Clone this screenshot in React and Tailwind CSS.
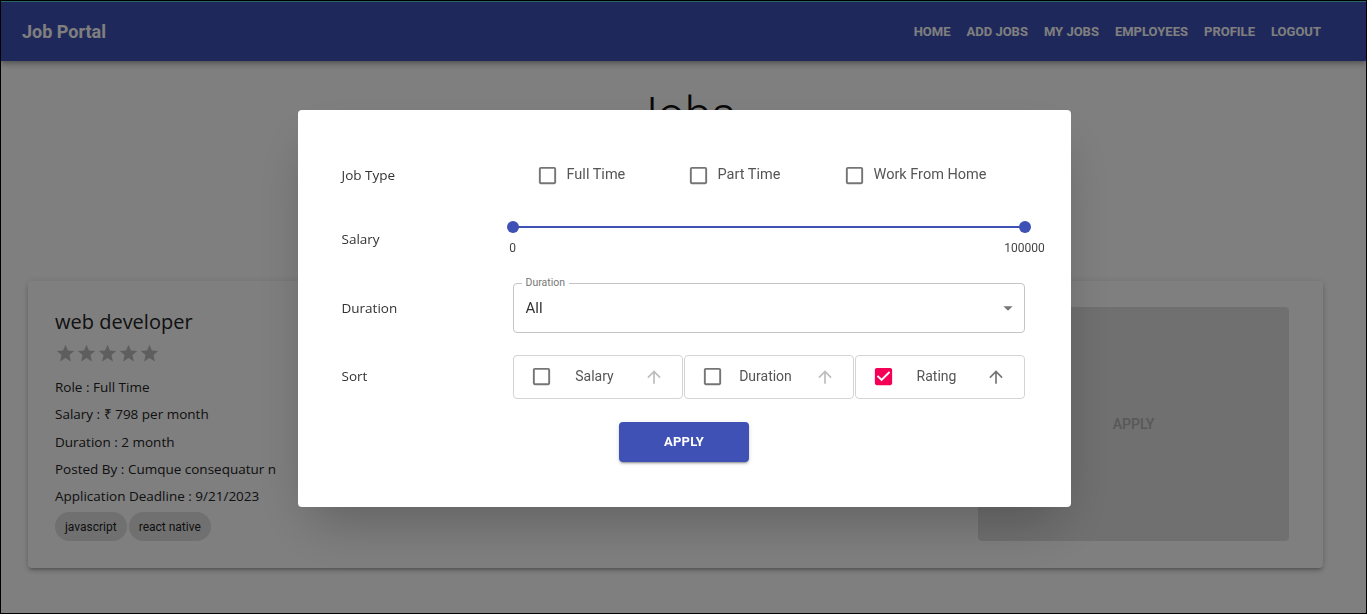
const STAR = "M12 17.27L18.18 21l-1.64-7.19L22 9.24l-7.19-.61L12 2 9.19 8.63 2 9.24l5.46 4.55L5.82 21z";
const BOX = "M19 5v14H5V5h14m0-2H5c-1.1 0-2 .9-2 2v14c0 1.1.9 2 2 2h14c1.1 0 2-.9 2-2V5c0-1.1-.9-2-2-2z";
const BOX_CHECKED =
  "M19 3H5c-1.11 0-2 .9-2 2v14c0 1.1.89 2 2 2h14c1.11 0 2-.9 2-2V5c0-1.1-.89-2-2-2zm-9 14l-5-5 1.41-1.41L10 14.17l7.59-7.59L19 8l-9 9z";
const ARROW_UP = "M4 12l1.41 1.41L11 7.83V20h2V7.83l5.58 5.59L20 12l-8-8-8 8z";

const NAV = ["Home", "Add Jobs", "My Jobs", "Employees", "Profile", "Logout"];
const ROBOTO = "font-['Roboto',sans-serif]";
const OPEN = "font-['Open_Sans',sans-serif]";

const Checkbox = ({ checked }) =>
  checked ? (
    <svg viewBox="0 0 24 24" className="h-[23px] w-[23px] shrink-0">
      <rect x="5" y="5" width="14" height="14" fill="#fff" />
      <path d={BOX_CHECKED} fill="#f50057" />
    </svg>
  ) : (
    <svg viewBox="0 0 24 24" className="h-[23px] w-[23px] shrink-0">
      <path d={BOX} fill="rgba(0,0,0,0.54)" />
    </svg>
  );

const JobTypeOption = ({ label, width }) => (
  <div className={`flex items-center ${width}`}>
    <Checkbox />
    <span className={`ml-[8px] -mt-[2px] text-[14.5px] text-[#555] ${ROBOTO}`}>{label}</span>
  </div>
);

const SortButton = ({ label, checked }) => (
  <div className="flex h-[44px] w-[170px] items-center rounded border border-[#d4d4d4] pl-[16px] pr-[18px]">
    <Checkbox checked={checked} />
    <span className={`mr-[7px] flex-1 text-center text-[14px] text-[#555] ${ROBOTO}`}>{label}</span>
    <svg viewBox="0 0 24 24" className="h-[20px] w-[20px]">
      <path d={ARROW_UP} fill={checked ? "#757575" : "#bdbdbd"} />
    </svg>
  </div>
);

const Row = ({ label, height, children }) => (
  <div className={`flex items-center ${height}`}>
    <div className={`w-[171px] shrink-0 text-[13.5px] text-[#333] ${OPEN}`}>{label}</div>
    <div className="w-[512px]">{children}</div>
  </div>
);

const FilterModal = () => (
  <div className="fixed inset-0 flex items-center justify-center bg-black/50">
    <div className="mt-[2px] ml-[1px] w-[773px] rounded bg-white px-[44px] pt-[41px] pb-[45px] shadow-2xl">
      <Row label="Job Type" height="h-[50px]">
        <div className="flex items-center pl-[23px]">
          <JobTypeOption label="Full Time" width="w-[151px]" />
          <JobTypeOption label="Part Time" width="w-[156px]" />
          <JobTypeOption label="Work From Home" width="" />
        </div>
      </Row>

      <Row label="Salary" height="h-[77px]">
        <div className="relative h-[40px]">
          <div className="relative flex h-[16px] items-center">
            <div className="h-[2px] w-full bg-[#3f51b5]" />
            <span className="absolute left-[-6px] h-[12px] w-[12px] rounded-full bg-[#3f51b5]" />
            <span className="absolute right-[-6px] h-[12px] w-[12px] rounded-full bg-[#3f51b5]" />
          </div>
          <div className={`relative mt-[6px] h-[14px] text-[12px] leading-[14px] text-[#444] ${ROBOTO}`}>
            <span className="absolute left-0 -translate-x-1/2">0</span>
            <span className="absolute right-0 translate-x-1/2">100000</span>
          </div>
        </div>
      </Row>

      <Row label="Duration" height="h-[61px]">
        <div className="relative flex h-[50px] items-center rounded border border-[#c4c4c4] pl-[12px] pr-[5px]">
          <span className={`absolute top-[-8px] left-[8px] bg-white px-[4px] text-[10.5px] leading-[14px] text-[#777] ${ROBOTO}`}>
            Duration
          </span>
          <span className={`flex-1 text-[15px] text-[#333] ${ROBOTO}`}>All</span>
          <svg viewBox="0 0 24 24" className="h-[22px] w-[22px]">
            <path d="M7 10l5 5 5-5z" fill="rgba(0,0,0,0.54)" />
          </svg>
        </div>
      </Row>

      <Row label="Sort" height="h-[76px]">
        <div className="flex gap-[1px]">
          <SortButton label="Salary" />
          <SortButton label="Duration" />
          <SortButton label="Rating" checked />
        </div>
      </Row>

      <div className="mt-[7px] flex justify-center">
        <button
          className={`h-[40px] w-[130px] rounded bg-[#3f51b5] text-[13px] font-bold tracking-[0.02em] text-white shadow-[0_3px_1px_-2px_rgba(0,0,0,0.2),0_2px_2px_0_rgba(0,0,0,0.14),0_1px_5px_0_rgba(0,0,0,0.12)] ${ROBOTO}`}
        >
          APPLY
        </button>
      </div>
    </div>
  </div>
);

const JobCard = () => (
  <div className="ml-[27px] mt-[138px] flex h-[287px] w-[1295px] rounded bg-white shadow-[0_3px_3px_-2px_rgba(0,0,0,0.2),0_3px_4px_0_rgba(0,0,0,0.14),0_1px_8px_0_rgba(0,0,0,0.12)]">
    <div className={`flex-1 pl-[27px] pt-[26px] text-[#222] ${OPEN}`}>
      <h5 className="text-[20px] leading-[30px] text-[#222]">web developer</h5>
      <div className="mt-[6px] flex">
        {[0, 1, 2, 3, 4].map((i) => (
          <svg key={i} viewBox="0 0 24 24" className="h-[21px] w-[21px]">
            <path d={STAR} fill="#bdbdbd" />
          </svg>
        ))}
      </div>
      <div className="mt-[10px] text-[13.5px] leading-[27.25px]">
        <p>Role : Full Time</p>
        <p>Salary : ₹ 798 per month</p>
        <p>Duration : 2 month</p>
        <p>Posted By : Cumque consequatur n</p>
        <p>Application Deadline : 9/21/2023</p>
      </div>
      <div className={`mt-[2px] flex gap-[2px] ${ROBOTO}`}>
        <span className="flex h-[29px] items-center rounded-full bg-[#e0e0e0] px-[10px] text-[12px] text-[#222]">javascript</span>
        <span className="flex h-[29px] items-center rounded-full bg-[#e0e0e0] px-[10px] text-[12px] text-[#222]">react native</span>
      </div>
    </div>
    <div
      className={`mt-[26px] mr-[34px] flex h-[234px] w-[311px] items-center justify-center rounded bg-[#e0e0e0] text-[14px] font-medium text-[#b0b0b0] ${ROBOTO}`}
    >
      APPLY
    </div>
  </div>
);

export default function App() {
  return (
    <div className="min-h-screen border border-black bg-white">
      <header className={`flex h-[60px] items-center justify-between border-t border-[#4fd0c8] bg-[#3f51b5] pl-[21px] pr-[37px] text-white shadow-[0_2px_4px_-1px_rgba(0,0,0,0.2),0_4px_5px_0_rgba(0,0,0,0.14),0_1px_10px_0_rgba(0,0,0,0.12)] ${ROBOTO}`}>
        <span className="text-[18px] font-bold">Job Portal</span>
        <nav className="flex">
          {NAV.map((item) => (
            <span key={item} className="px-[8px] text-[13px] font-bold uppercase">
              {item}
            </span>
          ))}
        </nav>
      </header>
      <h2 className={`mt-[26px] text-center text-[48px] font-light leading-[56px] text-[#111] ${ROBOTO}`}>Jobs</h2>
      <JobCard />
      <div className="h-[40px]" />
      <FilterModal />
    </div>
  );
}
